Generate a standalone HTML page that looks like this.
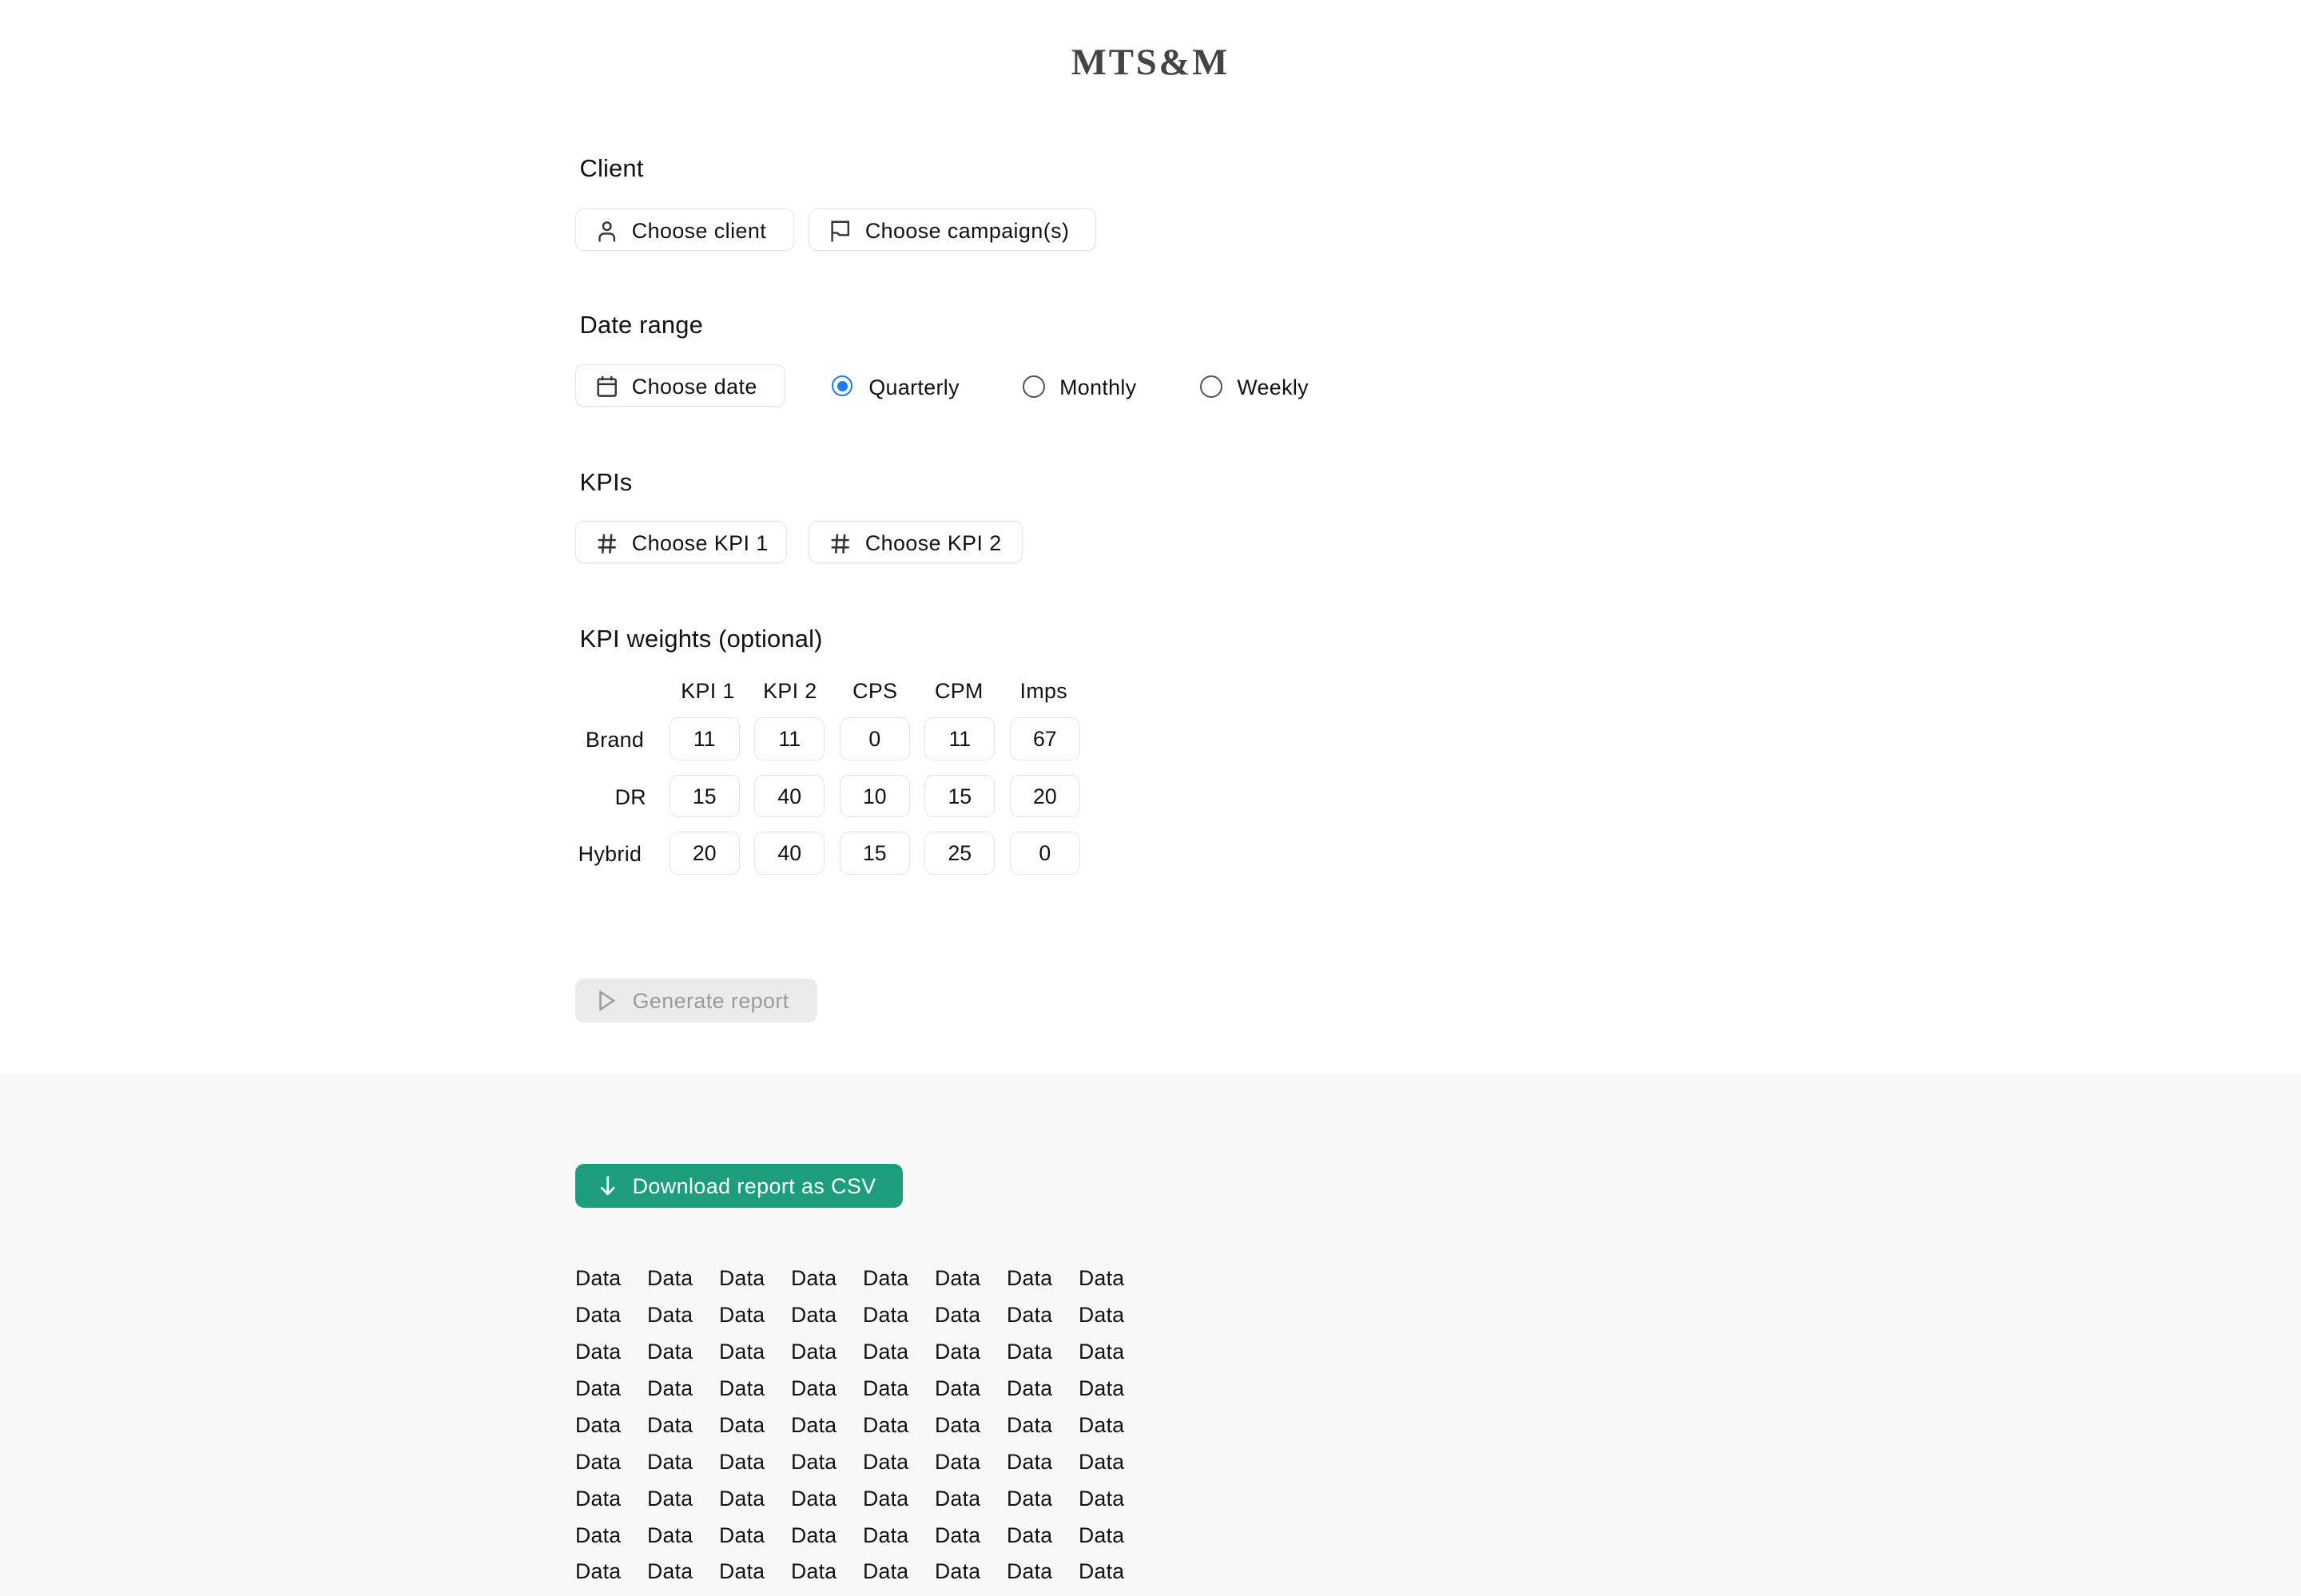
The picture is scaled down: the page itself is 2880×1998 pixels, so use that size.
<!DOCTYPE html>
<html><head><meta charset="utf-8">
<style>
html,body{margin:0;padding:0;background:#fff;}
body{width:2880px;height:1998px;overflow:hidden;}
#w{position:relative;width:1568px;height:1088px;zoom:1.836735;font-family:"Liberation Sans",sans-serif;color:#111;}
.a{position:absolute;}
.h{font-size:16.8px;color:#111;letter-spacing:0.1px;}
.btn{position:absolute;height:28px;border:1px solid #e4e4e4;border-radius:6px;background:#fff;box-shadow:0 1px 1px rgba(0,0,0,0.03);font-size:14.6px;line-height:30px;box-sizing:content-box;letter-spacing:0.25px;}
.btn svg{position:absolute;left:13px;top:7px;}
.btn span{position:absolute;left:38px;top:0;white-space:nowrap;}
.in{position:absolute;width:47px;height:28px;border:1px solid #e4e4e4;border-radius:6px;background:#fff;font-size:14.5px;line-height:29px;text-align:center;}
.lab{position:absolute;font-size:14.6px;letter-spacing:0.2px;}
.rad{position:absolute;width:13px;height:13px;border:1.5px solid #555;border-radius:50%;}
.d{position:absolute;font-size:14.5px;letter-spacing:0.15px;}
</style></head><body>
<div id="w">
<div class="a" style="left:0;width:1568px;text-align:center;top:28px;font-family:'Liberation Serif',serif;font-weight:bold;font-size:25.5px;color:#444;letter-spacing:1.5px;">MTS&amp;M</div>

<div class="a h" style="left:395px;top:105px;">Client</div>
<div class="btn" style="left:392px;top:142px;width:148px;">
<svg width="16" height="16" viewBox="0 0 16 16" fill="none" stroke="#333" stroke-width="1.3"><circle cx="8" cy="4.5" r="2.6"/><path d="M3 15v-2.5a3 3 0 0 1 3-3h4a3 3 0 0 1 3 3V15"/></svg>
<span>Choose client</span></div>
<div class="btn" style="left:551px;top:142px;width:195px;">
<svg width="16" height="16" viewBox="0 0 16 16" fill="none" stroke="#333" stroke-width="1.3"><path d="M2.5 15V1.5h11v9h-6l-1.5-1.5H2.5"/></svg>
<span>Choose campaign(s)</span></div>

<div class="a h" style="left:395px;top:212px;">Date range</div>
<div class="btn" style="left:392px;top:248px;width:142px;">
<svg width="16" height="16" viewBox="0 0 16 16" fill="none" stroke="#333" stroke-width="1.3"><rect x="2" y="3" width="12" height="11.5" rx="1"/><path d="M2 6.5h12M5 1v3M11 1v3"/></svg>
<span>Choose date</span></div>
<div class="rad" style="left:567px;top:256px;border-color:#1f7cf5;width:12px;height:12px;"><div style="position:absolute;left:2.5px;top:2.5px;width:7px;height:7px;border-radius:50%;background:#1f7cf5;"></div></div>
<div class="lab" style="left:592px;top:256px;">Quarterly</div>
<div class="rad" style="left:697px;top:256px;"></div>
<div class="lab" style="left:722px;top:256px;">Monthly</div>
<div class="rad" style="left:818px;top:256px;"></div>
<div class="lab" style="left:843px;top:256px;">Weekly</div>

<div class="a h" style="left:395px;top:319px;">KPIs</div>
<div class="btn" style="left:392px;top:355px;width:143px;">
<svg width="16" height="16" viewBox="0 0 16 16" fill="none" stroke="#333" stroke-width="1.4"><path d="M6 1.5L5 14.5M11 1.5l-1 13M2 5.5h12M2 10.5h12"/></svg>
<span>Choose KPI 1</span></div>
<div class="btn" style="left:551px;top:355px;width:145px;">
<svg width="16" height="16" viewBox="0 0 16 16" fill="none" stroke="#333" stroke-width="1.4"><path d="M6 1.5L5 14.5M11 1.5l-1 13M2 5.5h12M2 10.5h12"/></svg>
<span>Choose KPI 2</span></div>

<div class="a h" style="left:395px;top:426px;">KPI weights (optional)</div>
<div class="lab" style="left:464px;top:463px;">KPI 1</div>
<div class="lab" style="left:520px;top:463px;">KPI 2</div>
<div class="lab" style="left:581px;top:463px;">CPS</div>
<div class="lab" style="left:637px;top:463px;">CPM</div>
<div class="lab" style="left:695px;top:463px;">Imps</div>

<div class="lab" style="left:399px;top:496px;">Brand</div>
<div class="lab" style="left:419px;top:535px;">DR</div>
<div class="lab" style="left:394px;top:574px;">Hybrid</div>

<div class="in" style="left:456px;top:489px;">11</div>
<div class="in" style="left:514px;top:489px;">11</div>
<div class="in" style="left:572px;top:489px;">0</div>
<div class="in" style="left:630px;top:489px;">11</div>
<div class="in" style="left:688px;top:489px;">67</div>
<div class="in" style="left:456px;top:528px;">15</div>
<div class="in" style="left:514px;top:528px;">40</div>
<div class="in" style="left:572px;top:528px;">10</div>
<div class="in" style="left:630px;top:528px;">15</div>
<div class="in" style="left:688px;top:528px;">20</div>
<div class="in" style="left:456px;top:567px;">20</div>
<div class="in" style="left:514px;top:567px;">40</div>
<div class="in" style="left:572px;top:567px;">15</div>
<div class="in" style="left:630px;top:567px;">25</div>
<div class="in" style="left:688px;top:567px;">0</div>

<div class="a" style="left:392px;top:667px;width:165px;height:30px;border-radius:6px;background:#ebebeb;color:#9a9a9a;font-size:14.6px;line-height:31px;letter-spacing:0.25px;">
<svg style="position:absolute;left:14px;top:7px;" width="16" height="16" viewBox="0 0 16 16" fill="none" stroke="#9a9a9a" stroke-width="1.3"><path d="M3 2v12l9-6z"/></svg>
<span style="position:absolute;left:39px;">Generate report</span></div>

<div class="a" style="left:0;top:732px;width:1568px;height:356px;background:#f8f8f8;"></div>

<div class="a" style="left:392px;top:793px;width:223px;height:30px;border-radius:6px;background:#1c9e7e;color:#fff;font-size:14.6px;line-height:31px;letter-spacing:0.25px;">
<svg style="position:absolute;left:14px;top:7px;" width="16" height="16" viewBox="0 0 16 16" fill="none" stroke="#fff" stroke-width="1.5"><path d="M8 2v12M3.5 9.5L8 14l4.5-4.5"/></svg>
<span style="position:absolute;left:39px;">Download report as CSV</span></div>

<div id="data"></div>
</div>
<script>
var h='';for(var r=0;r<9;r++)for(var c=0;c<8;c++)h+='<div class="d" style="left:'+(392+c*49)+'px;top:'+(863+r*25)+'px">Data</div>';
document.getElementById('data').outerHTML=h;
</script>
</body></html>
